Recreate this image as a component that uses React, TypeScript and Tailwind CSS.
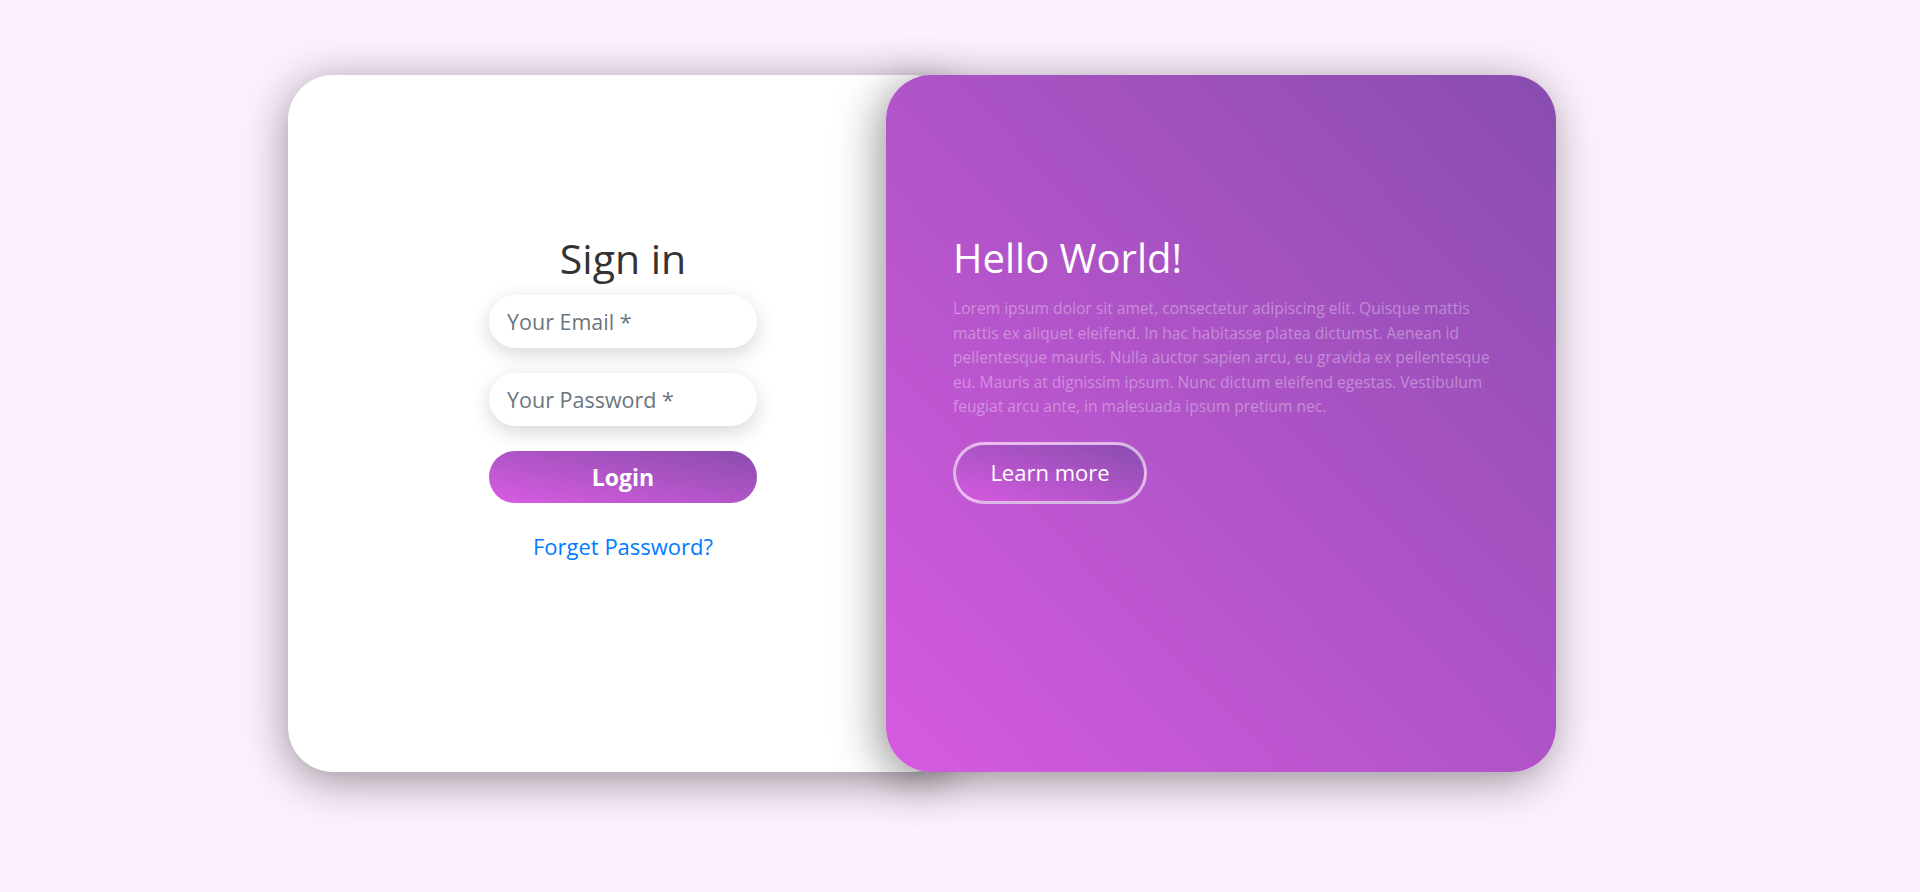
import React from "react";

const font = { fontFamily: '"Open Sans", "Noto Sans", Arial, sans-serif' };

export default function App() {
  return (
    <div className="min-h-screen w-full bg-[#fdf0fd] pt-[75px] pl-[288px]" style={font}>
      <div className="flex h-[697px] w-[1268px]">
        <div className="flex h-full w-[670px] shrink-0 flex-col items-center rounded-[45px] bg-white pt-[159px] shadow-[0_8px_45px_rgba(0,0,0,0.42)]">
          <h1 className="text-[41px] leading-[48px] font-normal text-[#333333]">Sign in</h1>
          <input
            className="mt-[13px] h-[53px] w-[268px] rounded-full bg-white px-[18px] text-[21.5px] text-[#495057] shadow-[0_6px_20px_rgba(0,0,0,0.16)] outline-none placeholder:text-[#6c757d]"
            placeholder="Your Email *"
          />
          <input
            className="mt-[25px] h-[53px] w-[268px] rounded-full bg-white px-[18px] text-[21.5px] text-[#495057] shadow-[0_6px_20px_rgba(0,0,0,0.16)] outline-none placeholder:text-[#6c757d]"
            placeholder="Your Password *"
          />
          <button className="mt-[25px] h-[52px] w-[268px] rounded-full bg-gradient-to-tr from-[#d95ce2] to-[#8a4cad] text-[23px] font-bold text-white">
            Login
          </button>
          <a className="mt-[27px] text-[22px] leading-[32px] text-[#007bff]" href="#">
            Forget Password?
          </a>
        </div>
        <div className="relative z-10 -ml-[72px] flex h-full w-[670px] shrink-0 flex-col items-start rounded-[45px] bg-gradient-to-tr from-[#d65ae0] to-[#894caf] pl-[67px] pr-[50px] pt-[159px] shadow-[-6px_8px_45px_rgba(0,0,0,0.42)]">
          <h1 className="text-[40px] leading-[48px] font-normal text-white">Hello World!</h1>
          <p className="mt-[14px] w-[548px] text-[15.6px] leading-[24.5px] text-white/35">
            Lorem ipsum dolor sit amet, consectetur adipiscing elit. Quisque mattis mattis ex aliquet eleifend. In hac habitasse platea dictumst. Aenean id pellentesque mauris. Nulla auctor sapien arcu, eu gravida ex pellentesque eu. Mauris at dignissim ipsum. Nunc dictum eleifend egestas. Vestibulum feugiat arcu ante, in malesuada ipsum pretium nec.
          </p>
          <button className="mt-[23px] h-[62px] w-[194px] rounded-full border-[3px] border-white/60 bg-gradient-to-tr from-[#d65ae0] to-[#894caf] text-[22px] text-white">
            Learn more
          </button>
        </div>
      </div>
    </div>
  );
}
